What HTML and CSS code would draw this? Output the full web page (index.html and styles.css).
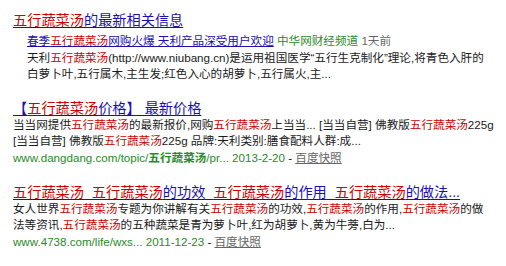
FILE: index.html
```html
<!DOCTYPE html>
<html lang="zh-CN">
<head>
  <meta charset="UTF-8" />
  <title>五行蔬菜汤 - 搜索结果</title>
  <link rel="stylesheet" href="styles.css">
</head>
<body>

  <div class="results">

    <!-- 新闻结果 -->
    <div class="result">
      <a class="title" href="#"><em>五行蔬菜汤</em>的最新相关信息</a>
      <div class="sub">
        <div class="line">
          <a class="sub-link" href="#">春季<em>五行蔬菜汤</em>网购火爆 天利产品深受用户欢迎</a>
          <span class="source">中华网财经频道</span>
          <span class="time">1天前</span>
        </div>
        <div class="line">天利<em>五行蔬菜汤</em>(http://www.niubang.cn)是运用祖国医学“五行生克制化”理论,将青色入肝的</div>
        <div class="line">白萝卜叶,五行属木,主生发;红色入心的胡萝卜,五行属火,主...</div>
      </div>
    </div>

    <div class="result">
      <a class="title" href="#">【<em>五行蔬菜汤</em>价格】 最新价格</a>
      <div class="line">当当网提供<em>五行蔬菜汤</em>的最新报价,网购<em>五行蔬菜汤</em>上当当... [当当自营] 佛教版<em>五行蔬菜汤</em>225g</div>
      <div class="line">[当当自营] 佛教版<em>五行蔬菜汤</em>225g 品牌:天利类别:膳食配料人群:成...</div>
      <div class="line">
        <span class="url">www.dangdang.com/topic/<b>五行蔬菜汤</b>/pr... 2013-2-20</span> -
        <a class="cache" href="#">百度快照</a>
      </div>
    </div>

    <div class="result">
      <a class="title" href="#"><em>五行蔬菜汤</em>_<em>五行蔬菜汤</em>的功效_<em>五行蔬菜汤</em>的作用_<em>五行蔬菜汤</em>的做法...</a>
      <div class="line">女人世界<em>五行蔬菜汤</em>专题为你讲解有关<em>五行蔬菜汤</em>的功效,<em>五行蔬菜汤</em>的作用,<em>五行蔬菜汤</em>的做</div>
      <div class="line">法等资讯,<em>五行蔬菜汤</em>的五种蔬菜是青为萝卜叶,红为胡萝卜,黄为牛蒡,白为...</div>
      <div class="line">
        <span class="url">www.4738.com/life/wxs... 2011-12-23</span> -
        <a class="cache" href="#">百度快照</a>
      </div>
    </div>

  </div>

</body>
</html>
```

FILE: styles.css
```css
* {
  box-sizing: border-box;
}

body {
  margin: 0;
  padding: 11px 13px;
  background: #fff;
  color: #1a1a1a;
  font-family: "Liberation Sans", "Noto Sans CJK SC", sans-serif;
  font-size: 11.6px;
}

em {
  font-style: normal;
  color: #c00;
}

.result {
  margin-bottom: 16px;
}

.title {
  display: inline-block;
  font-size: 14.2px;
  line-height: 18px;
  color: #1b0fb0;
  text-decoration: underline;
  text-underline-offset: 2px;
  white-space: nowrap;
}

.sub {
  margin-top: 4px;
  padding-left: 14px;
}

.line {
  line-height: 16.6px;
  white-space: nowrap;
}

.sub-link {
  color: #1b0fb0;
  text-decoration: underline;
}

.source {
  color: #2a8a2a;
}

.time {
  color: #666;
}

.url {
  color: #2a8a2a;
}

.url b {
  font-weight: bold;
  color: #2a8a2a;
}

.cache {
  color: #666;
  text-decoration: underline;
}
```
